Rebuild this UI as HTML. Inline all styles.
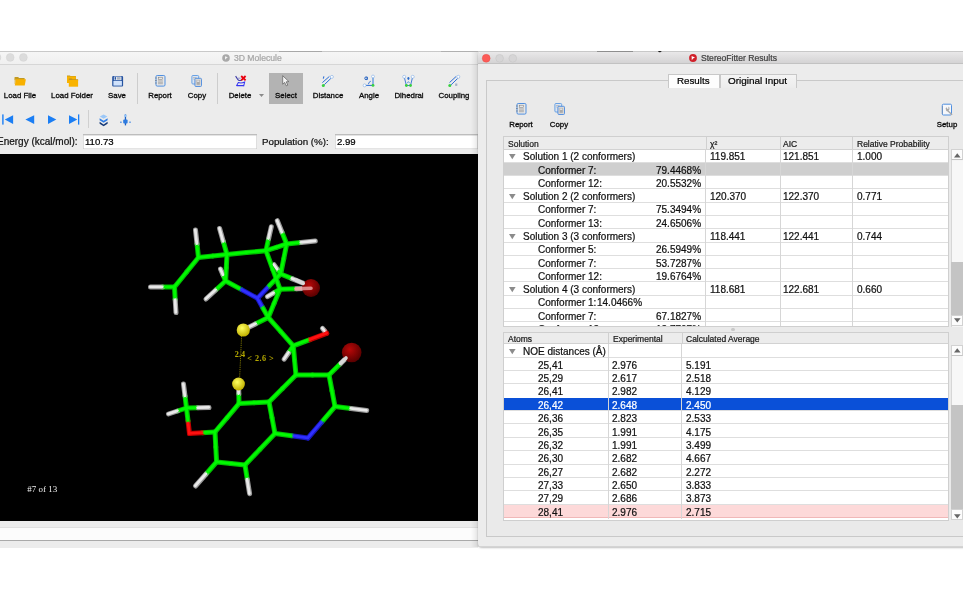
<!DOCTYPE html><html><head><meta charset="utf-8"><style>
html,body{margin:0;padding:0;}
body{width:963px;height:600px;position:relative;overflow:hidden;background:#fff;font-family:"Liberation Sans", sans-serif;}
.t{position:absolute;white-space:nowrap;line-height:1;will-change:transform;-webkit-text-stroke:0.22px currentColor;}
svg{position:absolute;overflow:visible;}
</style></head><body>
<div style="position:absolute;left:-10.00px;top:51.00px;width:488.00px;height:497.00px;background:#ececec;"></div>
<div style="position:absolute;left:-10.00px;top:51.00px;width:488.00px;height:1.00px;background:#c9c9c9;"></div>
<div style="position:absolute;left:-10.00px;top:52.00px;width:488.00px;height:11.50px;background:linear-gradient(#f6f6f6,#f0f0f0);border-bottom:1px solid #d6d6d6;"></div>
<svg style="left:0;top:50px" width="40" height="16" viewBox="0 50 40 16"><circle cx="-3" cy="57.4" r="3.9" fill="#dcdcdc" stroke="#d0d0d0" stroke-width="0.4"/><circle cx="10.2" cy="57.4" r="3.9" fill="#dcdcdc" stroke="#d0d0d0" stroke-width="0.4"/><circle cx="23.4" cy="57.4" r="3.9" fill="#dcdcdc" stroke="#d0d0d0" stroke-width="0.4"/></svg>
<svg style="left:222px;top:53.8px" width="8" height="8" viewBox="0 0 8 8"><circle cx="4" cy="4" r="3.8" fill="#a9a9a9"/><path d="M3 2.2 L5.8 3.2 L4.2 4.4 L3 5.8 Z" fill="#f2f2f2"/></svg>
<div class="t" style="left:234.00px;top:53.92px;font-size:8.6px;color:#a6a6a6;">3D Molecule</div>
<div style="position:absolute;left:268.75px;top:72.90px;width:34.45px;height:30.80px;background:#b3b3b3;"></div>
<div class="t" style="left:-280.00px;width:600px;text-align:center;top:91.95px;font-size:7.85px;color:#0a0a0a;-webkit-text-stroke:0.3px #0a0a0a;">Load File</div>
<div class="t" style="left:-227.70px;width:600px;text-align:center;top:91.95px;font-size:7.85px;color:#0a0a0a;-webkit-text-stroke:0.3px #0a0a0a;">Load Folder</div>
<div class="t" style="left:-182.70px;width:600px;text-align:center;top:91.95px;font-size:7.85px;color:#0a0a0a;-webkit-text-stroke:0.3px #0a0a0a;">Save</div>
<div class="t" style="left:-139.70px;width:600px;text-align:center;top:91.95px;font-size:7.85px;color:#0a0a0a;-webkit-text-stroke:0.3px #0a0a0a;">Report</div>
<div class="t" style="left:-103.20px;width:600px;text-align:center;top:91.95px;font-size:7.85px;color:#0a0a0a;-webkit-text-stroke:0.3px #0a0a0a;">Copy</div>
<div class="t" style="left:-59.70px;width:600px;text-align:center;top:91.95px;font-size:7.85px;color:#0a0a0a;-webkit-text-stroke:0.3px #0a0a0a;">Delete</div>
<div class="t" style="left:-14.30px;width:600px;text-align:center;top:91.95px;font-size:7.85px;color:#0a0a0a;-webkit-text-stroke:0.3px #0a0a0a;">Select</div>
<div class="t" style="left:28.00px;width:600px;text-align:center;top:91.95px;font-size:7.85px;color:#0a0a0a;-webkit-text-stroke:0.3px #0a0a0a;">Distance</div>
<div class="t" style="left:68.70px;width:600px;text-align:center;top:91.95px;font-size:7.85px;color:#0a0a0a;-webkit-text-stroke:0.3px #0a0a0a;">Angle</div>
<div class="t" style="left:108.50px;width:600px;text-align:center;top:91.95px;font-size:7.85px;color:#0a0a0a;-webkit-text-stroke:0.3px #0a0a0a;">Dihedral</div>
<div class="t" style="left:154.40px;width:600px;text-align:center;top:91.95px;font-size:7.85px;color:#0a0a0a;-webkit-text-stroke:0.3px #0a0a0a;">Coupling</div>
<div style="position:absolute;left:136.50px;top:73.00px;width:1.00px;height:30.70px;background:#cdcdcd;"></div>
<div style="position:absolute;left:216.80px;top:73.00px;width:1.00px;height:30.70px;background:#cdcdcd;"></div>
<svg style="left:258.5px;top:93.5px" width="5" height="3" viewBox="0 0 5 3"><path d="M0 0 H5 L2.5 3 Z" fill="#8a8a8a"/></svg>
<svg style="left:12px;top:74px" width="16" height="14" viewBox="12 74 16 14">
<path d="M14.6 77.1 H18.2 L19 77.9 H24.6 V80 H14.6 Z" fill="#c29a22"/>
<path d="M14.6 78 V84 L15.2 84 L15.9 79.4 Z" fill="#d8b040"/>
<path d="M15.9 79.2 H25.9 L24.7 85.5 H14.8 Z" fill="#f8b100"/>
</svg>
<svg style="left:65px;top:74px" width="16" height="14" viewBox="65 74 16 14">
<path d="M67 75.4 H69.8 L70.5 76.1 H75.9 V83 H67 Z" fill="#c29a22"/>
<path d="M67 76.4 H75.9 V83 H67 Z" fill="#f9b300"/>
<path d="M68.8 78.6 H71.6 L72.3 79.3 H78.1 V81 H68.8 Z" fill="#b8902a"/>
<path d="M68.8 79.9 H78.1 V86.7 H68.8 Z" fill="#f9b300"/>
</svg>
<svg style="left:110px;top:74px" width="15" height="14" viewBox="110 74 15 14">
<rect x="112.2" y="75.9" width="10.9" height="10.6" rx="1.1" fill="#2553a0"/>
<rect x="113.4" y="81" width="8.5" height="4.6" fill="#d0e2fb"/>
<rect x="113.9" y="76.6" width="7.5" height="3.6" fill="#f0f3f8"/>
<rect x="114.6" y="77.1" width="1.5" height="2.6" fill="#2553a0"/>
<rect x="117" y="77.1" width="3.6" height="2.6" fill="#a8b2c0"/>
</svg>
<svg style="left:154.7px;top:75.2px" width="10.5" height="11.5" viewBox="0 0 10.5 11.5">
<rect x="1" y="0.5" width="9" height="10.6" rx="1.2" fill="#e6e6e6" stroke="#4f8fe0" stroke-width="1"/>
<rect x="3.4" y="2.2" width="4" height="2.3" fill="none" stroke="#777" stroke-width="0.5"/>
<path d="M3 5.9 H7.9 M3 7.3 H7.9 M3 8.7 H7.9" stroke="#8a8a8a" stroke-width="0.6"/>
<path d="M0.2 3 H1.6 M0.2 5.5 H1.6 M0.2 8 H1.6" stroke="#555" stroke-width="0.6"/>
</svg>
<svg style="left:191.2px;top:75.0px" width="11" height="12" viewBox="0 0 11 12">
<rect x="0.9" y="0.5" width="6.8" height="8.5" rx="1" fill="#dde6f2" stroke="#5a98e2" stroke-width="0.9"/>
<path d="M2 2.5 H5.5 M2 4 H5.5" stroke="#999" stroke-width="0.5"/>
<rect x="3.9" y="3.3" width="6.6" height="8.2" rx="1" fill="#d6d6d6" stroke="#4a8ae0" stroke-width="0.9"/>
<rect x="5.6" y="5" width="3.2" height="4.8" fill="#aaa"/>
<rect x="6.1" y="5.5" width="2.2" height="1.3" fill="#eee"/>
</svg>
<svg style="left:233px;top:74px" width="15" height="14" viewBox="233 74 15 14">
<path d="M235.6 76.1 L237.8 79.5 Q238.4 80.5 239.6 80.5 H241.6" fill="none" stroke="#3b3aa6" stroke-width="1.1"/>
<path d="M237.6 78.2 H240.6" stroke="#8080c8" stroke-width="0.8"/>
<path d="M241.2 76 L245.6 80.4 M245.6 76 L241.2 80.4" stroke="#e8000e" stroke-width="1.8"/>
<path d="M236.4 86.1 L238.3 82.6 Q241.2 83.6 244.6 82.1 L243.6 86.4 M236.4 85.6 H243.8" fill="none" stroke="#3535f2" stroke-width="1.05"/>
</svg>
<svg style="left:281.8px;top:75.3px" width="8" height="12" viewBox="0 0 8 12">
<path d="M0.7 0.7 V9.2 L2.7 7.4 L4.3 10.8 L5.8 10.1 L4.2 6.8 L6.9 6.6 Z" fill="#f4f4f4" stroke="#5a5a5a" stroke-width="0.7" stroke-linejoin="round"/>
</svg>
<svg style="left:320px;top:74px" width="15" height="14" viewBox="320 74 15 14">
<path d="M322.4 82.6 L329.4 76.4 M324.3 84.7 L330.9 78.4" stroke="#2c6ed6" stroke-width="1"/>
<path d="M323.9 76.3 L323.3 78.6" stroke="#2c6ed6" stroke-width="1.1"/>
<circle cx="331.9" cy="76.9" r="1.5" fill="#fff" stroke="#6a9ee0" stroke-width="0.5"/>
<circle cx="323.3" cy="85.4" r="1.5" fill="#38d040"/>
</svg>
<svg style="left:362px;top:74px" width="14" height="14" viewBox="362 74 14 14">
<path d="M373 76.8 V85.4" stroke="#6d9fe0" stroke-width="1.5"/>
<path d="M364.6 85.4 H373" stroke="#2c6ed6" stroke-width="1"/>
<ellipse cx="366.1" cy="78.3" rx="1.3" ry="1.4" fill="none" stroke="#1f5fc0" stroke-width="1"/>
<path d="M367.2 76.8 V79.8" stroke="#1f5fc0" stroke-width="0.9"/>
<path d="M368.4 84.2 Q368.6 82 370.8 81.2" fill="none" stroke="#2c6ed6" stroke-width="0.9"/>
<circle cx="373" cy="76.5" r="1.45" fill="#fff" stroke="#6a9ee0" stroke-width="0.5"/>
<circle cx="364.6" cy="85.4" r="1.45" fill="#fff" stroke="#6a9ee0" stroke-width="0.5"/>
<circle cx="373" cy="85.4" r="1.45" fill="#38d040"/>
</svg>
<svg style="left:401px;top:74px" width="14" height="14" viewBox="401 74 14 14">
<path d="M404.2 76.8 L406.4 85.5 M412.7 76.8 L410.5 85.5 M406.4 85.5 H410.5" fill="none" stroke="#2c6ed6" stroke-width="0.9"/>
<ellipse cx="408.4" cy="78.4" rx="1.2" ry="1.1" fill="#3a7ad8"/>
<path d="M408.4 77 V80" stroke="#1f5fc0" stroke-width="0.7"/>
<path d="M407.1 83.2 L408.4 81.6 L409.7 83.2" fill="none" stroke="#4a86dc" stroke-width="0.8"/>
<circle cx="404.2" cy="76.8" r="1.5" fill="#fff" stroke="#6a9ee0" stroke-width="0.5"/>
<circle cx="412.7" cy="76.8" r="1.5" fill="#fff" stroke="#6a9ee0" stroke-width="0.5"/>
<circle cx="406.4" cy="85.5" r="1.45" fill="#38d040"/>
<circle cx="410.5" cy="85.5" r="1.45" fill="#38d040"/>
</svg>
<svg style="left:447px;top:74px" width="14" height="14" viewBox="447 74 14 14">
<path d="M449.5 82.6 L456.2 76.4 M451.1 84.8 L457.6 78.5" stroke="#2c6ed6" stroke-width="1"/>
<circle cx="458.3" cy="76.8" r="1.5" fill="#fff" stroke="#6a9ee0" stroke-width="0.5"/>
<circle cx="449.8" cy="85.5" r="1.5" fill="#38d040"/>
<path d="M455.2 84.1 H457.3 M455.2 85.2 H457.3" stroke="#6b7fa6" stroke-width="0.7"/>
</svg>
<svg style="left:0px;top:113px" width="140" height="14" viewBox="0 0 140 14">
<rect x="2.2" y="1.4" width="1.4" height="10.2" fill="#1b7ef4"/>
<path d="M4.8 6.5 L13.1 2.2 V10.9 Z" fill="#1b7ef4"/>
<path d="M25.4 6.5 L34.2 2.2 V10.9 Z" fill="#1b7ef4"/>
<path d="M56.3 6.5 L48 2.2 V10.9 Z" fill="#1b7ef4"/>
<path d="M77.3 6.5 L69 2.2 V10.9 Z" fill="#1b7ef4"/>
<rect x="78" y="1.4" width="1.3" height="10.2" fill="#1b7ef4"/>
<path d="M103.6 1.4 L107.4 3.6 L103.6 5.8 L99.8 3.6 Z" fill="#9cc8f8"/>
<path d="M99.6 5.2 L103.6 7.8 L107.6 5.2 V7.2 L103.6 9.8 L99.6 7.2 Z" fill="#2f7ee6"/>
<path d="M99.6 8.8 L103.6 11.4 L107.6 8.8 V10.8 L103.6 13.2 L99.6 10.8 Z" fill="#163a78"/>
<rect x="124.8" y="1.4" width="1.3" height="11" fill="#1b5fc4"/>
<circle cx="125.4" cy="2.8" r="1.3" fill="#8fc1f7"/>
<rect x="123.2" y="6.4" width="4.4" height="4" rx="1" fill="#2d7be0"/>
<rect x="120.2" y="8.6" width="1.4" height="1.2" fill="#2d7be0"/>
<rect x="129.3" y="8.6" width="1.4" height="1.2" fill="#2d7be0"/>
</svg>
<div style="position:absolute;left:88.00px;top:110.00px;width:1.00px;height:18.30px;background:#d0d0d0;"></div>
<div class="t" style="left:-2.60px;top:137.03px;font-size:10px;color:#111;">Energy (kcal/mol):</div>
<div style="position:absolute;left:82.90px;top:134.30px;width:173.90px;height:15.20px;background:#fff;box-shadow:inset 0 0 0 0.6px #c9c9c9;border-top:0.5px solid #bdbdbd;box-sizing:border-box;"></div>
<div class="t" style="left:85.20px;top:137.37px;font-size:9.6px;color:#000;">110.73</div>
<div class="t" style="left:262.40px;top:137.25px;font-size:9.75px;color:#111;">Population (%):</div>
<div style="position:absolute;left:334.90px;top:134.30px;width:143.10px;height:15.20px;background:#fff;box-shadow:inset 0 0 0 0.6px #c9c9c9;border-top:0.5px solid #bdbdbd;box-sizing:border-box;"></div>
<div class="t" style="left:337.20px;top:137.37px;font-size:9.6px;color:#000;">2.99</div>
<div style="position:absolute;left:0.00px;top:153.80px;width:478.00px;height:367.50px;background:#000;"></div>
<div style="position:absolute;left:0.00px;top:521.30px;width:478.00px;height:5.50px;background:#ececec;"></div>
<div style="position:absolute;left:0.00px;top:526.80px;width:478.00px;height:13.20px;background:#fcfcfc;border-top:0.5px solid #e0e0e0;box-sizing:border-box;"></div>
<div style="position:absolute;left:0.00px;top:540.00px;width:478.00px;height:1.00px;background:#a9a9a9;"></div>
<div style="position:absolute;left:0.00px;top:541.00px;width:478.00px;height:7.00px;background:#ececec;"></div>
<div style="position:absolute;left:279.00px;top:50.90px;width:43.00px;height:0.90px;background:#a8a8a8;"></div>
<div style="position:absolute;left:441.00px;top:50.90px;width:37.00px;height:0.90px;background:#b0b0b0;"></div>
<svg style="left:0;top:0" width="963" height="600" viewBox="0 0 963 600">
<defs><radialGradient id="rb" cx="40%" cy="35%" r="65%"><stop offset="0" stop-color="#b80808"/><stop offset="1" stop-color="#5a0000"/></radialGradient><radialGradient id="yb" cx="40%" cy="35%" r="65%"><stop offset="0" stop-color="#ffff60"/><stop offset="1" stop-color="#c0b000"/></radialGradient></defs>
<line x1="174.5" y1="287.0" x2="162.5" y2="287.0" stroke="#00c000" stroke-width="5.0" stroke-linecap="round"/>
<line x1="150.5" y1="287.0" x2="162.5" y2="287.0" stroke="#9a9a9a" stroke-width="5.0" stroke-linecap="round"/>
<line x1="174.5" y1="287.0" x2="175.2" y2="299.8" stroke="#00c000" stroke-width="5.0" stroke-linecap="round"/>
<line x1="176.0" y1="312.6" x2="175.2" y2="299.8" stroke="#9a9a9a" stroke-width="5.0" stroke-linecap="round"/>
<line x1="174.5" y1="287.0" x2="186.5" y2="272.2" stroke="#00c000" stroke-width="5.0" stroke-linecap="round"/>
<line x1="198.5" y1="257.5" x2="186.5" y2="272.2" stroke="#00c000" stroke-width="5.0" stroke-linecap="round"/>
<line x1="198.5" y1="257.5" x2="197.0" y2="243.8" stroke="#00c000" stroke-width="5.0" stroke-linecap="round"/>
<line x1="195.5" y1="230.0" x2="197.0" y2="243.8" stroke="#9a9a9a" stroke-width="5.0" stroke-linecap="round"/>
<line x1="198.5" y1="257.5" x2="212.8" y2="256.0" stroke="#00c000" stroke-width="5.0" stroke-linecap="round"/>
<line x1="227.0" y1="254.5" x2="212.8" y2="256.0" stroke="#00c000" stroke-width="5.0" stroke-linecap="round"/>
<line x1="227.0" y1="254.5" x2="223.3" y2="241.5" stroke="#00c000" stroke-width="5.0" stroke-linecap="round"/>
<line x1="219.6" y1="228.5" x2="223.3" y2="241.5" stroke="#9a9a9a" stroke-width="5.0" stroke-linecap="round"/>
<line x1="227.0" y1="254.5" x2="246.5" y2="252.6" stroke="#00c000" stroke-width="5.0" stroke-linecap="round"/>
<line x1="266.0" y1="250.7" x2="246.5" y2="252.6" stroke="#00c000" stroke-width="5.0" stroke-linecap="round"/>
<line x1="266.0" y1="250.7" x2="268.6" y2="238.7" stroke="#00c000" stroke-width="5.0" stroke-linecap="round"/>
<line x1="271.3" y1="226.7" x2="268.6" y2="238.7" stroke="#9a9a9a" stroke-width="5.0" stroke-linecap="round"/>
<line x1="266.0" y1="250.7" x2="276.4" y2="247.3" stroke="#00c000" stroke-width="5.0" stroke-linecap="round"/>
<line x1="286.7" y1="244.0" x2="276.4" y2="247.3" stroke="#00c000" stroke-width="5.0" stroke-linecap="round"/>
<line x1="286.7" y1="244.0" x2="282.0" y2="232.3" stroke="#00c000" stroke-width="5.0" stroke-linecap="round"/>
<line x1="277.3" y1="220.7" x2="282.0" y2="232.3" stroke="#9a9a9a" stroke-width="5.0" stroke-linecap="round"/>
<line x1="286.7" y1="244.0" x2="301.0" y2="242.5" stroke="#00c000" stroke-width="5.0" stroke-linecap="round"/>
<line x1="315.3" y1="241.0" x2="301.0" y2="242.5" stroke="#9a9a9a" stroke-width="5.0" stroke-linecap="round"/>
<line x1="227.0" y1="254.5" x2="226.3" y2="267.8" stroke="#00c000" stroke-width="5.0" stroke-linecap="round"/>
<line x1="225.6" y1="281.0" x2="226.3" y2="267.8" stroke="#00c000" stroke-width="5.0" stroke-linecap="round"/>
<line x1="225.6" y1="281.0" x2="223.1" y2="275.0" stroke="#00c000" stroke-width="5.0" stroke-linecap="round"/>
<line x1="220.5" y1="269.0" x2="223.1" y2="275.0" stroke="#9a9a9a" stroke-width="5.0" stroke-linecap="round"/>
<line x1="225.6" y1="281.0" x2="215.8" y2="290.0" stroke="#00c000" stroke-width="5.0" stroke-linecap="round"/>
<line x1="206.0" y1="299.0" x2="215.8" y2="290.0" stroke="#9a9a9a" stroke-width="5.0" stroke-linecap="round"/>
<line x1="225.6" y1="281.0" x2="241.6" y2="289.6" stroke="#00c000" stroke-width="5.0" stroke-linecap="round"/>
<line x1="257.5" y1="298.3" x2="241.6" y2="289.6" stroke="#1818c0" stroke-width="5.0" stroke-linecap="round"/>
<line x1="257.5" y1="298.3" x2="269.1" y2="286.1" stroke="#1818c0" stroke-width="5.0" stroke-linecap="round"/>
<line x1="280.7" y1="274.0" x2="269.1" y2="286.1" stroke="#00c000" stroke-width="5.0" stroke-linecap="round"/>
<line x1="286.7" y1="244.0" x2="283.7" y2="259.0" stroke="#00c000" stroke-width="5.0" stroke-linecap="round"/>
<line x1="280.7" y1="274.0" x2="283.7" y2="259.0" stroke="#00c000" stroke-width="5.0" stroke-linecap="round"/>
<line x1="280.7" y1="274.0" x2="277.4" y2="269.4" stroke="#00c000" stroke-width="5.0" stroke-linecap="round"/>
<line x1="274.0" y1="264.7" x2="277.4" y2="269.4" stroke="#9a9a9a" stroke-width="5.0" stroke-linecap="round"/>
<line x1="280.7" y1="274.0" x2="292.0" y2="278.6" stroke="#00c000" stroke-width="5.0" stroke-linecap="round"/>
<line x1="303.3" y1="283.3" x2="292.0" y2="278.6" stroke="#9a9a9a" stroke-width="5.0" stroke-linecap="round"/>
<line x1="266.0" y1="250.7" x2="273.0" y2="269.9" stroke="#00c000" stroke-width="5.0" stroke-linecap="round"/>
<line x1="280.0" y1="289.2" x2="273.0" y2="269.9" stroke="#00c000" stroke-width="5.0" stroke-linecap="round"/>
<line x1="280.0" y1="289.2" x2="273.8" y2="292.9" stroke="#00c000" stroke-width="5.0" stroke-linecap="round"/>
<line x1="267.5" y1="296.7" x2="273.8" y2="292.9" stroke="#9a9a9a" stroke-width="5.0" stroke-linecap="round"/>
<line x1="280.0" y1="289.2" x2="296.2" y2="288.8" stroke="#00c000" stroke-width="5.0" stroke-linecap="round"/>
<line x1="312.5" y1="288.3" x2="296.2" y2="288.8" stroke="#9a9a9a" stroke-width="5.0" stroke-linecap="round"/>
<line x1="257.5" y1="298.3" x2="262.9" y2="307.9" stroke="#1818c0" stroke-width="5.0" stroke-linecap="round"/>
<line x1="268.3" y1="317.5" x2="262.9" y2="307.9" stroke="#00c000" stroke-width="5.0" stroke-linecap="round"/>
<line x1="280.0" y1="289.2" x2="274.1" y2="303.4" stroke="#00c000" stroke-width="5.0" stroke-linecap="round"/>
<line x1="268.3" y1="317.5" x2="274.1" y2="303.4" stroke="#00c000" stroke-width="5.0" stroke-linecap="round"/>
<line x1="268.3" y1="317.5" x2="255.8" y2="323.8" stroke="#00c000" stroke-width="5.0" stroke-linecap="round"/>
<line x1="243.3" y1="330.0" x2="255.8" y2="323.8" stroke="#9a9a9a" stroke-width="5.0" stroke-linecap="round"/>
<line x1="268.3" y1="317.5" x2="280.8" y2="331.6" stroke="#00c000" stroke-width="5.0" stroke-linecap="round"/>
<line x1="293.3" y1="345.8" x2="280.8" y2="331.6" stroke="#00c000" stroke-width="5.0" stroke-linecap="round"/>
<line x1="293.3" y1="345.8" x2="310.0" y2="339.6" stroke="#00c000" stroke-width="5.0" stroke-linecap="round"/>
<line x1="326.7" y1="333.3" x2="310.0" y2="339.6" stroke="#c00000" stroke-width="5.0" stroke-linecap="round"/>
<line x1="326.7" y1="333.3" x2="324.6" y2="330.8" stroke="#c00000" stroke-width="5.0" stroke-linecap="round"/>
<line x1="322.5" y1="328.3" x2="324.6" y2="330.8" stroke="#9a9a9a" stroke-width="5.0" stroke-linecap="round"/>
<line x1="293.3" y1="345.8" x2="288.8" y2="352.5" stroke="#00c000" stroke-width="5.0" stroke-linecap="round"/>
<line x1="284.2" y1="359.2" x2="288.8" y2="352.5" stroke="#9a9a9a" stroke-width="5.0" stroke-linecap="round"/>
<line x1="293.3" y1="345.8" x2="294.6" y2="360.4" stroke="#00c000" stroke-width="5.0" stroke-linecap="round"/>
<line x1="296.0" y1="375.0" x2="294.6" y2="360.4" stroke="#00c000" stroke-width="5.0" stroke-linecap="round"/>
<line x1="296.0" y1="375.0" x2="312.5" y2="375.0" stroke="#00c000" stroke-width="5.0" stroke-linecap="round"/>
<line x1="329.0" y1="375.0" x2="312.5" y2="375.0" stroke="#00c000" stroke-width="5.0" stroke-linecap="round"/>
<line x1="329.0" y1="375.0" x2="340.4" y2="363.8" stroke="#00c000" stroke-width="5.0" stroke-linecap="round"/>
<line x1="351.7" y1="352.5" x2="340.4" y2="363.8" stroke="#9a9a9a" stroke-width="5.0" stroke-linecap="round"/>
<line x1="329.0" y1="375.0" x2="332.0" y2="390.8" stroke="#00c000" stroke-width="5.0" stroke-linecap="round"/>
<line x1="335.0" y1="406.6" x2="332.0" y2="390.8" stroke="#00c000" stroke-width="5.0" stroke-linecap="round"/>
<line x1="335.0" y1="406.6" x2="350.9" y2="408.6" stroke="#00c000" stroke-width="5.0" stroke-linecap="round"/>
<line x1="366.7" y1="410.5" x2="350.9" y2="408.6" stroke="#9a9a9a" stroke-width="5.0" stroke-linecap="round"/>
<line x1="335.0" y1="406.6" x2="321.5" y2="422.3" stroke="#00c000" stroke-width="5.0" stroke-linecap="round"/>
<line x1="308.0" y1="438.0" x2="321.5" y2="422.3" stroke="#1818c0" stroke-width="5.0" stroke-linecap="round"/>
<line x1="308.0" y1="438.0" x2="291.5" y2="435.8" stroke="#1818c0" stroke-width="5.0" stroke-linecap="round"/>
<line x1="275.0" y1="433.6" x2="291.5" y2="435.8" stroke="#00c000" stroke-width="5.0" stroke-linecap="round"/>
<line x1="275.0" y1="433.6" x2="272.0" y2="417.8" stroke="#00c000" stroke-width="5.0" stroke-linecap="round"/>
<line x1="269.0" y1="402.0" x2="272.0" y2="417.8" stroke="#00c000" stroke-width="5.0" stroke-linecap="round"/>
<line x1="269.0" y1="402.0" x2="282.5" y2="388.5" stroke="#00c000" stroke-width="5.0" stroke-linecap="round"/>
<line x1="296.0" y1="375.0" x2="282.5" y2="388.5" stroke="#00c000" stroke-width="5.0" stroke-linecap="round"/>
<line x1="269.0" y1="402.0" x2="254.0" y2="402.8" stroke="#00c000" stroke-width="5.0" stroke-linecap="round"/>
<line x1="239.0" y1="403.6" x2="254.0" y2="402.8" stroke="#00c000" stroke-width="5.0" stroke-linecap="round"/>
<line x1="239.0" y1="403.6" x2="238.8" y2="393.8" stroke="#00c000" stroke-width="5.0" stroke-linecap="round"/>
<line x1="238.5" y1="384.0" x2="238.8" y2="393.8" stroke="#9a9a9a" stroke-width="5.0" stroke-linecap="round"/>
<line x1="239.0" y1="403.6" x2="227.0" y2="417.8" stroke="#00c000" stroke-width="5.0" stroke-linecap="round"/>
<line x1="215.0" y1="432.0" x2="227.0" y2="417.8" stroke="#00c000" stroke-width="5.0" stroke-linecap="round"/>
<line x1="215.0" y1="432.0" x2="202.2" y2="432.8" stroke="#00c000" stroke-width="5.0" stroke-linecap="round"/>
<line x1="189.5" y1="433.6" x2="202.2" y2="432.8" stroke="#c00000" stroke-width="5.0" stroke-linecap="round"/>
<line x1="189.5" y1="433.6" x2="188.0" y2="420.8" stroke="#c00000" stroke-width="5.0" stroke-linecap="round"/>
<line x1="186.5" y1="408.0" x2="188.0" y2="420.8" stroke="#00c000" stroke-width="5.0" stroke-linecap="round"/>
<line x1="186.5" y1="408.0" x2="185.0" y2="396.0" stroke="#00c000" stroke-width="5.0" stroke-linecap="round"/>
<line x1="183.5" y1="384.0" x2="185.0" y2="396.0" stroke="#9a9a9a" stroke-width="5.0" stroke-linecap="round"/>
<line x1="186.5" y1="408.0" x2="197.8" y2="407.8" stroke="#00c000" stroke-width="5.0" stroke-linecap="round"/>
<line x1="209.0" y1="407.5" x2="197.8" y2="407.8" stroke="#9a9a9a" stroke-width="5.0" stroke-linecap="round"/>
<line x1="186.5" y1="408.0" x2="177.5" y2="411.0" stroke="#00c000" stroke-width="5.0" stroke-linecap="round"/>
<line x1="168.5" y1="414.0" x2="177.5" y2="411.0" stroke="#9a9a9a" stroke-width="5.0" stroke-linecap="round"/>
<line x1="215.0" y1="432.0" x2="215.8" y2="447.0" stroke="#00c000" stroke-width="5.0" stroke-linecap="round"/>
<line x1="216.6" y1="462.0" x2="215.8" y2="447.0" stroke="#00c000" stroke-width="5.0" stroke-linecap="round"/>
<line x1="216.6" y1="462.0" x2="206.1" y2="474.0" stroke="#00c000" stroke-width="5.0" stroke-linecap="round"/>
<line x1="195.5" y1="486.0" x2="206.1" y2="474.0" stroke="#9a9a9a" stroke-width="5.0" stroke-linecap="round"/>
<line x1="216.6" y1="462.0" x2="230.8" y2="463.5" stroke="#00c000" stroke-width="5.0" stroke-linecap="round"/>
<line x1="245.0" y1="465.0" x2="230.8" y2="463.5" stroke="#00c000" stroke-width="5.0" stroke-linecap="round"/>
<line x1="245.0" y1="465.0" x2="247.3" y2="479.4" stroke="#00c000" stroke-width="5.0" stroke-linecap="round"/>
<line x1="249.6" y1="493.7" x2="247.3" y2="479.4" stroke="#9a9a9a" stroke-width="5.0" stroke-linecap="round"/>
<line x1="245.0" y1="465.0" x2="260.0" y2="449.3" stroke="#00c000" stroke-width="5.0" stroke-linecap="round"/>
<line x1="275.0" y1="433.6" x2="260.0" y2="449.3" stroke="#00c000" stroke-width="5.0" stroke-linecap="round"/>
<line x1="174.3" y1="286.8" x2="162.3" y2="286.8" stroke="#00fa00" stroke-width="2.8" stroke-linecap="round"/>
<line x1="150.3" y1="286.8" x2="162.3" y2="286.8" stroke="#e8e8e8" stroke-width="2.8" stroke-linecap="round"/>
<line x1="174.3" y1="286.8" x2="175.1" y2="299.6" stroke="#00fa00" stroke-width="2.8" stroke-linecap="round"/>
<line x1="175.8" y1="312.4" x2="175.1" y2="299.6" stroke="#e8e8e8" stroke-width="2.8" stroke-linecap="round"/>
<line x1="174.3" y1="286.8" x2="186.3" y2="272.1" stroke="#00fa00" stroke-width="2.8" stroke-linecap="round"/>
<line x1="198.3" y1="257.3" x2="186.3" y2="272.1" stroke="#00fa00" stroke-width="2.8" stroke-linecap="round"/>
<line x1="198.3" y1="257.3" x2="196.8" y2="243.6" stroke="#00fa00" stroke-width="2.8" stroke-linecap="round"/>
<line x1="195.3" y1="229.8" x2="196.8" y2="243.6" stroke="#e8e8e8" stroke-width="2.8" stroke-linecap="round"/>
<line x1="198.3" y1="257.3" x2="212.6" y2="255.8" stroke="#00fa00" stroke-width="2.8" stroke-linecap="round"/>
<line x1="226.8" y1="254.3" x2="212.6" y2="255.8" stroke="#00fa00" stroke-width="2.8" stroke-linecap="round"/>
<line x1="226.8" y1="254.3" x2="223.1" y2="241.3" stroke="#00fa00" stroke-width="2.8" stroke-linecap="round"/>
<line x1="219.4" y1="228.3" x2="223.1" y2="241.3" stroke="#e8e8e8" stroke-width="2.8" stroke-linecap="round"/>
<line x1="226.8" y1="254.3" x2="246.3" y2="252.4" stroke="#00fa00" stroke-width="2.8" stroke-linecap="round"/>
<line x1="265.8" y1="250.5" x2="246.3" y2="252.4" stroke="#00fa00" stroke-width="2.8" stroke-linecap="round"/>
<line x1="265.8" y1="250.5" x2="268.4" y2="238.5" stroke="#00fa00" stroke-width="2.8" stroke-linecap="round"/>
<line x1="271.1" y1="226.5" x2="268.4" y2="238.5" stroke="#e8e8e8" stroke-width="2.8" stroke-linecap="round"/>
<line x1="265.8" y1="250.5" x2="276.2" y2="247.2" stroke="#00fa00" stroke-width="2.8" stroke-linecap="round"/>
<line x1="286.5" y1="243.8" x2="276.2" y2="247.2" stroke="#00fa00" stroke-width="2.8" stroke-linecap="round"/>
<line x1="286.5" y1="243.8" x2="281.8" y2="232.2" stroke="#00fa00" stroke-width="2.8" stroke-linecap="round"/>
<line x1="277.1" y1="220.5" x2="281.8" y2="232.2" stroke="#e8e8e8" stroke-width="2.8" stroke-linecap="round"/>
<line x1="286.5" y1="243.8" x2="300.8" y2="242.3" stroke="#00fa00" stroke-width="2.8" stroke-linecap="round"/>
<line x1="315.1" y1="240.8" x2="300.8" y2="242.3" stroke="#e8e8e8" stroke-width="2.8" stroke-linecap="round"/>
<line x1="226.8" y1="254.3" x2="226.1" y2="267.6" stroke="#00fa00" stroke-width="2.8" stroke-linecap="round"/>
<line x1="225.4" y1="280.8" x2="226.1" y2="267.6" stroke="#00fa00" stroke-width="2.8" stroke-linecap="round"/>
<line x1="225.4" y1="280.8" x2="222.9" y2="274.8" stroke="#00fa00" stroke-width="2.8" stroke-linecap="round"/>
<line x1="220.3" y1="268.8" x2="222.9" y2="274.8" stroke="#e8e8e8" stroke-width="2.8" stroke-linecap="round"/>
<line x1="225.4" y1="280.8" x2="215.6" y2="289.8" stroke="#00fa00" stroke-width="2.8" stroke-linecap="round"/>
<line x1="205.8" y1="298.8" x2="215.6" y2="289.8" stroke="#e8e8e8" stroke-width="2.8" stroke-linecap="round"/>
<line x1="225.4" y1="280.8" x2="241.4" y2="289.4" stroke="#00fa00" stroke-width="2.8" stroke-linecap="round"/>
<line x1="257.3" y1="298.1" x2="241.4" y2="289.4" stroke="#3030ff" stroke-width="2.8" stroke-linecap="round"/>
<line x1="257.3" y1="298.1" x2="268.9" y2="285.9" stroke="#3030ff" stroke-width="2.8" stroke-linecap="round"/>
<line x1="280.5" y1="273.8" x2="268.9" y2="285.9" stroke="#00fa00" stroke-width="2.8" stroke-linecap="round"/>
<line x1="286.5" y1="243.8" x2="283.5" y2="258.8" stroke="#00fa00" stroke-width="2.8" stroke-linecap="round"/>
<line x1="280.5" y1="273.8" x2="283.5" y2="258.8" stroke="#00fa00" stroke-width="2.8" stroke-linecap="round"/>
<line x1="280.5" y1="273.8" x2="277.2" y2="269.2" stroke="#00fa00" stroke-width="2.8" stroke-linecap="round"/>
<line x1="273.8" y1="264.5" x2="277.2" y2="269.2" stroke="#e8e8e8" stroke-width="2.8" stroke-linecap="round"/>
<line x1="280.5" y1="273.8" x2="291.8" y2="278.4" stroke="#00fa00" stroke-width="2.8" stroke-linecap="round"/>
<line x1="303.1" y1="283.1" x2="291.8" y2="278.4" stroke="#e8e8e8" stroke-width="2.8" stroke-linecap="round"/>
<line x1="265.8" y1="250.5" x2="272.8" y2="269.8" stroke="#00fa00" stroke-width="2.8" stroke-linecap="round"/>
<line x1="279.8" y1="289.0" x2="272.8" y2="269.8" stroke="#00fa00" stroke-width="2.8" stroke-linecap="round"/>
<line x1="279.8" y1="289.0" x2="273.6" y2="292.8" stroke="#00fa00" stroke-width="2.8" stroke-linecap="round"/>
<line x1="267.3" y1="296.5" x2="273.6" y2="292.8" stroke="#e8e8e8" stroke-width="2.8" stroke-linecap="round"/>
<line x1="279.8" y1="289.0" x2="296.1" y2="288.6" stroke="#00fa00" stroke-width="2.8" stroke-linecap="round"/>
<line x1="312.3" y1="288.1" x2="296.1" y2="288.6" stroke="#e8e8e8" stroke-width="2.8" stroke-linecap="round"/>
<line x1="257.3" y1="298.1" x2="262.7" y2="307.7" stroke="#3030ff" stroke-width="2.8" stroke-linecap="round"/>
<line x1="268.1" y1="317.3" x2="262.7" y2="307.7" stroke="#00fa00" stroke-width="2.8" stroke-linecap="round"/>
<line x1="279.8" y1="289.0" x2="273.9" y2="303.2" stroke="#00fa00" stroke-width="2.8" stroke-linecap="round"/>
<line x1="268.1" y1="317.3" x2="273.9" y2="303.2" stroke="#00fa00" stroke-width="2.8" stroke-linecap="round"/>
<line x1="268.1" y1="317.3" x2="255.6" y2="323.6" stroke="#00fa00" stroke-width="2.8" stroke-linecap="round"/>
<line x1="243.1" y1="329.8" x2="255.6" y2="323.6" stroke="#e8e8e8" stroke-width="2.8" stroke-linecap="round"/>
<line x1="268.1" y1="317.3" x2="280.6" y2="331.4" stroke="#00fa00" stroke-width="2.8" stroke-linecap="round"/>
<line x1="293.1" y1="345.6" x2="280.6" y2="331.4" stroke="#00fa00" stroke-width="2.8" stroke-linecap="round"/>
<line x1="293.1" y1="345.6" x2="309.8" y2="339.4" stroke="#00fa00" stroke-width="2.8" stroke-linecap="round"/>
<line x1="326.5" y1="333.1" x2="309.8" y2="339.4" stroke="#ff1010" stroke-width="2.8" stroke-linecap="round"/>
<line x1="326.5" y1="333.1" x2="324.4" y2="330.6" stroke="#ff1010" stroke-width="2.8" stroke-linecap="round"/>
<line x1="322.3" y1="328.1" x2="324.4" y2="330.6" stroke="#e8e8e8" stroke-width="2.8" stroke-linecap="round"/>
<line x1="293.1" y1="345.6" x2="288.6" y2="352.3" stroke="#00fa00" stroke-width="2.8" stroke-linecap="round"/>
<line x1="284.0" y1="359.0" x2="288.6" y2="352.3" stroke="#e8e8e8" stroke-width="2.8" stroke-linecap="round"/>
<line x1="293.1" y1="345.6" x2="294.4" y2="360.2" stroke="#00fa00" stroke-width="2.8" stroke-linecap="round"/>
<line x1="295.8" y1="374.8" x2="294.4" y2="360.2" stroke="#00fa00" stroke-width="2.8" stroke-linecap="round"/>
<line x1="295.8" y1="374.8" x2="312.3" y2="374.8" stroke="#00fa00" stroke-width="2.8" stroke-linecap="round"/>
<line x1="328.8" y1="374.8" x2="312.3" y2="374.8" stroke="#00fa00" stroke-width="2.8" stroke-linecap="round"/>
<line x1="328.8" y1="374.8" x2="340.2" y2="363.6" stroke="#00fa00" stroke-width="2.8" stroke-linecap="round"/>
<line x1="351.5" y1="352.3" x2="340.2" y2="363.6" stroke="#e8e8e8" stroke-width="2.8" stroke-linecap="round"/>
<line x1="328.8" y1="374.8" x2="331.8" y2="390.6" stroke="#00fa00" stroke-width="2.8" stroke-linecap="round"/>
<line x1="334.8" y1="406.4" x2="331.8" y2="390.6" stroke="#00fa00" stroke-width="2.8" stroke-linecap="round"/>
<line x1="334.8" y1="406.4" x2="350.7" y2="408.4" stroke="#00fa00" stroke-width="2.8" stroke-linecap="round"/>
<line x1="366.5" y1="410.3" x2="350.7" y2="408.4" stroke="#e8e8e8" stroke-width="2.8" stroke-linecap="round"/>
<line x1="334.8" y1="406.4" x2="321.3" y2="422.1" stroke="#00fa00" stroke-width="2.8" stroke-linecap="round"/>
<line x1="307.8" y1="437.8" x2="321.3" y2="422.1" stroke="#3030ff" stroke-width="2.8" stroke-linecap="round"/>
<line x1="307.8" y1="437.8" x2="291.3" y2="435.6" stroke="#3030ff" stroke-width="2.8" stroke-linecap="round"/>
<line x1="274.8" y1="433.4" x2="291.3" y2="435.6" stroke="#00fa00" stroke-width="2.8" stroke-linecap="round"/>
<line x1="274.8" y1="433.4" x2="271.8" y2="417.6" stroke="#00fa00" stroke-width="2.8" stroke-linecap="round"/>
<line x1="268.8" y1="401.8" x2="271.8" y2="417.6" stroke="#00fa00" stroke-width="2.8" stroke-linecap="round"/>
<line x1="268.8" y1="401.8" x2="282.3" y2="388.3" stroke="#00fa00" stroke-width="2.8" stroke-linecap="round"/>
<line x1="295.8" y1="374.8" x2="282.3" y2="388.3" stroke="#00fa00" stroke-width="2.8" stroke-linecap="round"/>
<line x1="268.8" y1="401.8" x2="253.8" y2="402.6" stroke="#00fa00" stroke-width="2.8" stroke-linecap="round"/>
<line x1="238.8" y1="403.4" x2="253.8" y2="402.6" stroke="#00fa00" stroke-width="2.8" stroke-linecap="round"/>
<line x1="238.8" y1="403.4" x2="238.6" y2="393.6" stroke="#00fa00" stroke-width="2.8" stroke-linecap="round"/>
<line x1="238.3" y1="383.8" x2="238.6" y2="393.6" stroke="#e8e8e8" stroke-width="2.8" stroke-linecap="round"/>
<line x1="238.8" y1="403.4" x2="226.8" y2="417.6" stroke="#00fa00" stroke-width="2.8" stroke-linecap="round"/>
<line x1="214.8" y1="431.8" x2="226.8" y2="417.6" stroke="#00fa00" stroke-width="2.8" stroke-linecap="round"/>
<line x1="214.8" y1="431.8" x2="202.1" y2="432.6" stroke="#00fa00" stroke-width="2.8" stroke-linecap="round"/>
<line x1="189.3" y1="433.4" x2="202.1" y2="432.6" stroke="#ff1010" stroke-width="2.8" stroke-linecap="round"/>
<line x1="189.3" y1="433.4" x2="187.8" y2="420.6" stroke="#ff1010" stroke-width="2.8" stroke-linecap="round"/>
<line x1="186.3" y1="407.8" x2="187.8" y2="420.6" stroke="#00fa00" stroke-width="2.8" stroke-linecap="round"/>
<line x1="186.3" y1="407.8" x2="184.8" y2="395.8" stroke="#00fa00" stroke-width="2.8" stroke-linecap="round"/>
<line x1="183.3" y1="383.8" x2="184.8" y2="395.8" stroke="#e8e8e8" stroke-width="2.8" stroke-linecap="round"/>
<line x1="186.3" y1="407.8" x2="197.6" y2="407.6" stroke="#00fa00" stroke-width="2.8" stroke-linecap="round"/>
<line x1="208.8" y1="407.3" x2="197.6" y2="407.6" stroke="#e8e8e8" stroke-width="2.8" stroke-linecap="round"/>
<line x1="186.3" y1="407.8" x2="177.3" y2="410.8" stroke="#00fa00" stroke-width="2.8" stroke-linecap="round"/>
<line x1="168.3" y1="413.8" x2="177.3" y2="410.8" stroke="#e8e8e8" stroke-width="2.8" stroke-linecap="round"/>
<line x1="214.8" y1="431.8" x2="215.6" y2="446.8" stroke="#00fa00" stroke-width="2.8" stroke-linecap="round"/>
<line x1="216.4" y1="461.8" x2="215.6" y2="446.8" stroke="#00fa00" stroke-width="2.8" stroke-linecap="round"/>
<line x1="216.4" y1="461.8" x2="205.9" y2="473.8" stroke="#00fa00" stroke-width="2.8" stroke-linecap="round"/>
<line x1="195.3" y1="485.8" x2="205.9" y2="473.8" stroke="#e8e8e8" stroke-width="2.8" stroke-linecap="round"/>
<line x1="216.4" y1="461.8" x2="230.6" y2="463.3" stroke="#00fa00" stroke-width="2.8" stroke-linecap="round"/>
<line x1="244.8" y1="464.8" x2="230.6" y2="463.3" stroke="#00fa00" stroke-width="2.8" stroke-linecap="round"/>
<line x1="244.8" y1="464.8" x2="247.1" y2="479.2" stroke="#00fa00" stroke-width="2.8" stroke-linecap="round"/>
<line x1="249.4" y1="493.5" x2="247.1" y2="479.2" stroke="#e8e8e8" stroke-width="2.8" stroke-linecap="round"/>
<line x1="244.8" y1="464.8" x2="259.8" y2="449.1" stroke="#00fa00" stroke-width="2.8" stroke-linecap="round"/>
<line x1="274.8" y1="433.4" x2="259.8" y2="449.1" stroke="#00fa00" stroke-width="2.8" stroke-linecap="round"/>
<circle cx="311" cy="288" r="9" fill="url(#rb)"/>
<circle cx="351.7" cy="352.5" r="9.8" fill="url(#rb)"/>
<line x1="296" y1="288.7" x2="311" y2="288.3" stroke="#e8a0a0" stroke-width="3.6" stroke-linecap="round" opacity="0.85"/>
<line x1="296" y1="280" x2="303.3" y2="283.3" stroke="#d8d8d8" stroke-width="3.6" stroke-linecap="round"/>
<line x1="341" y1="363" x2="346" y2="358" stroke="#d8d8d8" stroke-width="3.6" stroke-linecap="round"/>
<line x1="241.6" y1="336" x2="239.6" y2="378" stroke="#9a9000" stroke-width="0.8" stroke-dasharray="1.2,1"/>
<circle cx="243.3" cy="330" r="6.6" fill="url(#yb)"/>
<circle cx="238.5" cy="384" r="6.4" fill="url(#yb)"/>
<text x="234.8" y="357" font-family="Liberation Serif" font-weight="bold" font-size="8.2" fill="#b4a800">2.4</text>
<text x="247.3" y="361" font-family="Liberation Serif" font-weight="bold" font-size="8.2" letter-spacing="0.45" fill="#b4a800">&lt; 2.6 &gt;</text>
<text x="27.3" y="491.8" font-family="Liberation Serif" font-size="9" fill="#f0f0f0">#7 of 13</text>
</svg>
<div style="position:absolute;left:471.00px;top:52.00px;width:8.00px;height:495.00px;background:linear-gradient(to right, rgba(0,0,0,0), rgba(0,0,0,0.10));"></div>
<div style="position:absolute;left:477.50px;top:51.90px;width:500.00px;height:494.80px;background:#ececec;box-shadow:0 1px 2px rgba(0,0,0,0.25);border-radius:4px 4px 0 4px;"></div>
<div style="position:absolute;left:477.50px;top:51.90px;width:500.00px;height:12.00px;background:linear-gradient(#e9e8e9,#d4d3d4);border-bottom:0.6px solid #c2c2c2;box-sizing:border-box;border-radius:4px 0 0 0;"></div>
<div style="position:absolute;left:477.50px;top:51.40px;width:500.00px;height:0.80px;background:#c8c8c8;"></div>
<svg style="left:478px;top:52px" width="42" height="14" viewBox="478 52 42 14"><circle cx="486.2" cy="58.3" r="3.95" fill="#fc5b57" stroke="#e24b47" stroke-width="0.4"/><circle cx="499.6" cy="58.3" r="3.85" fill="#d6d5d6" stroke="#c2c2c2" stroke-width="0.5"/><circle cx="512.8" cy="58.3" r="3.85" fill="#d6d5d6" stroke="#c2c2c2" stroke-width="0.5"/></svg>
<svg style="left:689px;top:54.3px" width="8" height="8" viewBox="0 0 8 8"><circle cx="4" cy="4" r="3.9" fill="#d0202a"/><path d="M2.6 2 L6 3.4 L4 4.6 L2.8 6.2 Z" fill="#fff"/></svg>
<div class="t" style="left:700.80px;top:54.02px;font-size:8.6px;color:#3e3e3e;">StereoFitter Results</div>
<div style="position:absolute;left:597.00px;top:51.20px;width:36.00px;height:0.90px;background:#8e8e8e;"></div>
<svg style="left:656px;top:50px" width="8" height="4" viewBox="656 50 8 4"><ellipse cx="659.8" cy="51.6" rx="1.8" ry="0.7" fill="#111"/></svg>
<div style="position:absolute;left:477.50px;top:546.20px;width:500.00px;height:0.80px;background:#d4d4d4;"></div>
<div style="position:absolute;left:486.10px;top:80.00px;width:500.00px;height:457.10px;border:1px solid #c9c9c9;border-right:none;box-sizing:border-box;background:#eaeaea;"></div>
<div style="position:absolute;left:719.50px;top:74.30px;width:77.00px;height:13.30px;background:linear-gradient(#f4f4f4,#ececec);border:1px solid #c8c8c8;border-bottom:none;box-sizing:border-box;"></div>
<div style="position:absolute;left:668.00px;top:73.50px;width:51.50px;height:14.20px;background:#fdfdfd;border:1px solid #c8c8c8;border-bottom:none;box-sizing:border-box;"></div>
<div class="t" style="left:677.00px;top:76.35px;font-size:9.75px;color:#000;">Results</div>
<div class="t" style="left:728.00px;top:76.18px;font-size:9.95px;color:#000;">Original Input</div>
<svg style="left:515.8px;top:103.2px" width="10.5" height="11.5" viewBox="0 0 10.5 11.5">
<rect x="1" y="0.5" width="9" height="10.6" rx="1.2" fill="#e6e6e6" stroke="#4f8fe0" stroke-width="1"/>
<rect x="3.4" y="2.2" width="4" height="2.3" fill="none" stroke="#777" stroke-width="0.5"/>
<path d="M3 5.9 H7.9 M3 7.3 H7.9 M3 8.7 H7.9" stroke="#8a8a8a" stroke-width="0.6"/>
<path d="M0.2 3 H1.6 M0.2 5.5 H1.6 M0.2 8 H1.6" stroke="#555" stroke-width="0.6"/>
</svg>
<svg style="left:554.3px;top:103.2px" width="11" height="12" viewBox="0 0 11 12">
<rect x="0.9" y="0.5" width="6.8" height="8.5" rx="1" fill="#dde6f2" stroke="#5a98e2" stroke-width="0.9"/>
<path d="M2 2.5 H5.5 M2 4 H5.5" stroke="#999" stroke-width="0.5"/>
<rect x="3.9" y="3.3" width="6.6" height="8.2" rx="1" fill="#d6d6d6" stroke="#4a8ae0" stroke-width="0.9"/>
<rect x="5.6" y="5" width="3.2" height="4.8" fill="#aaa"/>
<rect x="6.1" y="5.5" width="2.2" height="1.3" fill="#eee"/>
</svg>
<svg style="left:940.5px;top:102.6px" width="14" height="14" viewBox="0 0 14 14">
<rect x="1.3" y="1.2" width="9.2" height="10.8" rx="1.1" fill="#f6f7fa" stroke="#4f8fe0" stroke-width="1"/>
<path d="M0.8 4 H2 M0.8 6 H2 M0.8 8 H2 M0.8 10 H2" stroke="#666" stroke-width="0.5"/>
<path d="M4.6 5.2 L5.6 4.2 L6.4 6 L7.6 5.4 L7.2 3.6 L8.4 4.4 Q9 6.6 7.6 7.4 L11.6 11.4 L10.6 12.2 L6.6 8.4 Q4.8 8.2 4.6 5.2 Z" fill="#a8a8a8"/>
</svg>
<div class="t" style="left:221.30px;width:600px;text-align:center;top:120.65px;font-size:7.85px;color:#0a0a0a;-webkit-text-stroke:0.3px #0a0a0a;">Report</div>
<div class="t" style="left:259.00px;width:600px;text-align:center;top:120.65px;font-size:7.85px;color:#0a0a0a;-webkit-text-stroke:0.3px #0a0a0a;">Copy</div>
<div class="t" style="left:646.50px;width:600px;text-align:center;top:120.65px;font-size:7.85px;color:#0a0a0a;-webkit-text-stroke:0.3px #0a0a0a;">Setup</div>
<div style="position:absolute;left:503.20px;top:136.30px;width:446.20px;height:190.70px;background:#fff;border:1px solid #cfcfcf;box-sizing:border-box;"></div>
<div style="position:absolute;left:503.20px;top:135.80px;width:446.20px;height:13.90px;background:#ececec;border:1px solid #cfcfcf;border-bottom:1px solid #d2d2d2;box-sizing:border-box;"></div>
<div style="position:absolute;left:504.2px;top:149.7px;width:444.2px;height:176.3px;overflow:hidden;">
<div style="position:absolute;left:0.00px;top:12.27px;width:446.20px;height:1.00px;background:#dedede;"></div>
<svg style="left:5.10px;top:4.60px" width="7" height="6" viewBox="0 0 7 6"><path d="M0 0 H6.6 L3.3 5.2 Z" fill="#8b8b8b"/></svg>
<div class="t" style="left:18.80px;top:2.73px;font-size:10px;color:#111;">Solution 1 (2 conformers)</div>
<div class="t" style="left:205.60px;top:2.73px;font-size:10px;color:#111;">119.851</div>
<div class="t" style="left:279.10px;top:2.73px;font-size:10px;color:#111;">121.851</div>
<div class="t" style="left:352.80px;top:2.73px;font-size:10px;color:#111;">1.000</div>
<div style="position:absolute;left:0.00px;top:13.27px;width:446.20px;height:13.27px;background:#cfcfcf;"></div>
<div style="position:absolute;left:0.00px;top:25.54px;width:446.20px;height:1.00px;background:#dedede;"></div>
<div class="t" style="left:33.50px;top:16.00px;font-size:10px;color:#111;">Conformer 7:</div>
<div class="t" style="left:151.80px;top:16.00px;font-size:10px;color:#111;">79.4468%</div>
<div style="position:absolute;left:0.00px;top:38.81px;width:446.20px;height:1.00px;background:#dedede;"></div>
<div class="t" style="left:33.50px;top:29.27px;font-size:10px;color:#111;">Conformer 12:</div>
<div class="t" style="left:151.80px;top:29.27px;font-size:10px;color:#111;">20.5532%</div>
<div style="position:absolute;left:0.00px;top:52.08px;width:446.20px;height:1.00px;background:#dedede;"></div>
<svg style="left:5.10px;top:44.41px" width="7" height="6" viewBox="0 0 7 6"><path d="M0 0 H6.6 L3.3 5.2 Z" fill="#8b8b8b"/></svg>
<div class="t" style="left:18.80px;top:42.55px;font-size:10px;color:#111;">Solution 2 (2 conformers)</div>
<div class="t" style="left:205.60px;top:42.55px;font-size:10px;color:#111;">120.370</div>
<div class="t" style="left:279.10px;top:42.55px;font-size:10px;color:#111;">122.370</div>
<div class="t" style="left:352.80px;top:42.55px;font-size:10px;color:#111;">0.771</div>
<div style="position:absolute;left:0.00px;top:65.35px;width:446.20px;height:1.00px;background:#dedede;"></div>
<div class="t" style="left:33.50px;top:55.81px;font-size:10px;color:#111;">Conformer 7:</div>
<div class="t" style="left:151.80px;top:55.81px;font-size:10px;color:#111;">75.3494%</div>
<div style="position:absolute;left:0.00px;top:78.62px;width:446.20px;height:1.00px;background:#dedede;"></div>
<div class="t" style="left:33.50px;top:69.08px;font-size:10px;color:#111;">Conformer 13:</div>
<div class="t" style="left:151.80px;top:69.08px;font-size:10px;color:#111;">24.6506%</div>
<div style="position:absolute;left:0.00px;top:91.89px;width:446.20px;height:1.00px;background:#dedede;"></div>
<svg style="left:5.10px;top:84.22px" width="7" height="6" viewBox="0 0 7 6"><path d="M0 0 H6.6 L3.3 5.2 Z" fill="#8b8b8b"/></svg>
<div class="t" style="left:18.80px;top:82.36px;font-size:10px;color:#111;">Solution 3 (3 conformers)</div>
<div class="t" style="left:205.60px;top:82.36px;font-size:10px;color:#111;">118.441</div>
<div class="t" style="left:279.10px;top:82.36px;font-size:10px;color:#111;">122.441</div>
<div class="t" style="left:352.80px;top:82.36px;font-size:10px;color:#111;">0.744</div>
<div style="position:absolute;left:0.00px;top:105.16px;width:446.20px;height:1.00px;background:#dedede;"></div>
<div class="t" style="left:33.50px;top:95.62px;font-size:10px;color:#111;">Conformer 5:</div>
<div class="t" style="left:151.80px;top:95.62px;font-size:10px;color:#111;">26.5949%</div>
<div style="position:absolute;left:0.00px;top:118.43px;width:446.20px;height:1.00px;background:#dedede;"></div>
<div class="t" style="left:33.50px;top:108.89px;font-size:10px;color:#111;">Conformer 7:</div>
<div class="t" style="left:151.80px;top:108.89px;font-size:10px;color:#111;">53.7287%</div>
<div style="position:absolute;left:0.00px;top:131.70px;width:446.20px;height:1.00px;background:#dedede;"></div>
<div class="t" style="left:33.50px;top:122.16px;font-size:10px;color:#111;">Conformer 12:</div>
<div class="t" style="left:151.80px;top:122.16px;font-size:10px;color:#111;">19.6764%</div>
<div style="position:absolute;left:0.00px;top:144.97px;width:446.20px;height:1.00px;background:#dedede;"></div>
<svg style="left:5.10px;top:137.30px" width="7" height="6" viewBox="0 0 7 6"><path d="M0 0 H6.6 L3.3 5.2 Z" fill="#8b8b8b"/></svg>
<div class="t" style="left:18.80px;top:135.43px;font-size:10px;color:#111;">Solution 4 (3 conformers)</div>
<div class="t" style="left:205.60px;top:135.43px;font-size:10px;color:#111;">118.681</div>
<div class="t" style="left:279.10px;top:135.43px;font-size:10px;color:#111;">122.681</div>
<div class="t" style="left:352.80px;top:135.43px;font-size:10px;color:#111;">0.660</div>
<div style="position:absolute;left:0.00px;top:158.24px;width:446.20px;height:1.00px;background:#dedede;"></div>
<div class="t" style="left:33.50px;top:148.70px;font-size:10px;color:#111;">Conformer 1:</div>
<div class="t" style="left:92.50px;top:148.70px;font-size:10px;color:#111;">14.0466%</div>
<div style="position:absolute;left:0.00px;top:171.51px;width:446.20px;height:1.00px;background:#dedede;"></div>
<div class="t" style="left:33.50px;top:161.97px;font-size:10px;color:#111;">Conformer 7:</div>
<div class="t" style="left:151.80px;top:161.97px;font-size:10px;color:#111;">67.1827%</div>
<div style="position:absolute;left:0.00px;top:184.78px;width:446.20px;height:1.00px;background:#dedede;"></div>
<div class="t" style="left:33.50px;top:175.24px;font-size:10px;color:#111;">Conformer 12:</div>
<div class="t" style="left:151.80px;top:175.24px;font-size:10px;color:#111;">12.7707%</div>
<div style="position:absolute;left:201.30px;top:0.00px;width:1.00px;height:176.30px;background:#d6d6d6;"></div>
<div style="position:absolute;left:275.40px;top:0.00px;width:1.00px;height:176.30px;background:#d6d6d6;"></div>
<div style="position:absolute;left:348.20px;top:0.00px;width:1.00px;height:176.30px;background:#d6d6d6;"></div>
</div>
<div style="position:absolute;left:705.50px;top:136.30px;width:1.00px;height:12.90px;background:#d0d0d0;"></div>
<div style="position:absolute;left:779.60px;top:136.30px;width:1.00px;height:12.90px;background:#d0d0d0;"></div>
<div style="position:absolute;left:852.40px;top:136.30px;width:1.00px;height:12.90px;background:#d0d0d0;"></div>
<div class="t" style="left:507.50px;top:139.80px;font-size:8.5px;color:#1a1a1a;">Solution</div>
<div class="t" style="left:709.80px;top:139.80px;font-size:8.5px;color:#1a1a1a;">χ²</div>
<div class="t" style="left:783.30px;top:139.80px;font-size:8.5px;color:#1a1a1a;">AIC</div>
<div class="t" style="left:857.00px;top:139.80px;font-size:8.5px;color:#1a1a1a;">Relative Probability</div>
<div style="position:absolute;left:951.20px;top:149.30px;width:12.00px;height:177.70px;background:#f4f4f4;border-left:1px solid #d6d6d6;box-sizing:border-box;"></div>
<div style="position:absolute;left:951.20px;top:149.30px;width:12.00px;height:11.20px;background:#fcfcfc;border:1px solid #d2d2d2;border-bottom:1.5px solid #c4c4c4;box-sizing:border-box;"></div>
<div style="position:absolute;left:951.20px;top:160.50px;width:12.00px;height:101.20px;background:#f7f7f7;border-left:1px solid #d6d6d6;box-sizing:border-box;"></div>
<div style="position:absolute;left:951.20px;top:261.70px;width:12.00px;height:53.10px;background:#c4c4c4;"></div>
<div style="position:absolute;left:951.20px;top:314.80px;width:12.00px;height:11.60px;background:#fcfcfc;border:1px solid #d2d2d2;box-sizing:border-box;"></div>
<svg style="left:954px;top:152.6px" width="7" height="5" viewBox="0 0 7 5"><path d="M0 4.5 H6.6 L3.3 0.3 Z" fill="#666"/></svg>
<svg style="left:954px;top:318.4px" width="7" height="5" viewBox="0 0 7 5"><path d="M0 0.3 H6.6 L3.3 4.5 Z" fill="#666"/></svg>
<div style="position:absolute;left:731.30px;top:327.60px;width:3.40px;height:3.40px;border-radius:50%;background:#c8c8c8;"></div>
<div style="position:absolute;left:503.20px;top:332.00px;width:446.20px;height:188.50px;background:#fff;border:1px solid #cfcfcf;box-sizing:border-box;"></div>
<div style="position:absolute;left:503.20px;top:332.00px;width:446.20px;height:12.40px;background:#ececec;border:1px solid #cfcfcf;border-bottom:1px solid #d2d2d2;box-sizing:border-box;"></div>
<div style="position:absolute;left:504.2px;top:344.4px;width:444.2px;height:175.10000000000002px;overflow:hidden;">
<div style="position:absolute;left:0.00px;top:12.35px;width:446.20px;height:1.00px;background:#dedede;"></div>
<svg style="left:5.10px;top:4.60px" width="7" height="6" viewBox="0 0 7 6"><path d="M0 0 H6.6 L3.3 5.2 Z" fill="#8b8b8b"/></svg>
<div class="t" style="left:18.60px;top:3.04px;font-size:10px;color:#111;">NOE distances (Å)</div>
<div style="position:absolute;left:0.00px;top:25.70px;width:446.20px;height:1.00px;background:#dedede;"></div>
<div class="t" style="left:33.80px;top:16.39px;font-size:10px;color:#111;">25,41</div>
<div class="t" style="left:108.30px;top:16.39px;font-size:10px;color:#111;">2.976</div>
<div class="t" style="left:181.60px;top:16.39px;font-size:10px;color:#111;">5.191</div>
<div style="position:absolute;left:0.00px;top:39.05px;width:446.20px;height:1.00px;background:#dedede;"></div>
<div class="t" style="left:33.80px;top:29.74px;font-size:10px;color:#111;">25,29</div>
<div class="t" style="left:108.30px;top:29.74px;font-size:10px;color:#111;">2.617</div>
<div class="t" style="left:181.60px;top:29.74px;font-size:10px;color:#111;">2.518</div>
<div class="t" style="left:33.80px;top:43.08px;font-size:10px;color:#111;">26,41</div>
<div class="t" style="left:108.30px;top:43.08px;font-size:10px;color:#111;">2.982</div>
<div class="t" style="left:181.60px;top:43.08px;font-size:10px;color:#111;">4.129</div>
<div style="position:absolute;left:0.00px;top:53.40px;width:446.20px;height:13.35px;background:#0a50d8;"></div>
<div style="position:absolute;left:0.00px;top:65.75px;width:446.20px;height:1.00px;background:#dedede;"></div>
<div class="t" style="left:33.80px;top:56.44px;font-size:10px;color:#fff;">26,42</div>
<div class="t" style="left:108.30px;top:56.44px;font-size:10px;color:#fff;">2.648</div>
<div class="t" style="left:181.60px;top:56.44px;font-size:10px;color:#fff;">2.450</div>
<div style="position:absolute;left:0.00px;top:79.10px;width:446.20px;height:1.00px;background:#dedede;"></div>
<div class="t" style="left:33.80px;top:69.78px;font-size:10px;color:#111;">26,36</div>
<div class="t" style="left:108.30px;top:69.78px;font-size:10px;color:#111;">2.823</div>
<div class="t" style="left:181.60px;top:69.78px;font-size:10px;color:#111;">2.533</div>
<div style="position:absolute;left:0.00px;top:92.45px;width:446.20px;height:1.00px;background:#dedede;"></div>
<div class="t" style="left:33.80px;top:83.13px;font-size:10px;color:#111;">26,35</div>
<div class="t" style="left:108.30px;top:83.13px;font-size:10px;color:#111;">1.991</div>
<div class="t" style="left:181.60px;top:83.13px;font-size:10px;color:#111;">4.175</div>
<div style="position:absolute;left:0.00px;top:105.80px;width:446.20px;height:1.00px;background:#dedede;"></div>
<div class="t" style="left:33.80px;top:96.48px;font-size:10px;color:#111;">26,32</div>
<div class="t" style="left:108.30px;top:96.48px;font-size:10px;color:#111;">1.991</div>
<div class="t" style="left:181.60px;top:96.48px;font-size:10px;color:#111;">3.499</div>
<div style="position:absolute;left:0.00px;top:119.15px;width:446.20px;height:1.00px;background:#dedede;"></div>
<div class="t" style="left:33.80px;top:109.83px;font-size:10px;color:#111;">26,30</div>
<div class="t" style="left:108.30px;top:109.83px;font-size:10px;color:#111;">2.682</div>
<div class="t" style="left:181.60px;top:109.83px;font-size:10px;color:#111;">4.667</div>
<div style="position:absolute;left:0.00px;top:132.50px;width:446.20px;height:1.00px;background:#dedede;"></div>
<div class="t" style="left:33.80px;top:123.18px;font-size:10px;color:#111;">26,27</div>
<div class="t" style="left:108.30px;top:123.18px;font-size:10px;color:#111;">2.682</div>
<div class="t" style="left:181.60px;top:123.18px;font-size:10px;color:#111;">2.272</div>
<div style="position:absolute;left:0.00px;top:145.85px;width:446.20px;height:1.00px;background:#dedede;"></div>
<div class="t" style="left:33.80px;top:136.53px;font-size:10px;color:#111;">27,33</div>
<div class="t" style="left:108.30px;top:136.53px;font-size:10px;color:#111;">2.650</div>
<div class="t" style="left:181.60px;top:136.53px;font-size:10px;color:#111;">3.833</div>
<div style="position:absolute;left:0.00px;top:159.20px;width:446.20px;height:1.00px;background:#dedede;"></div>
<div class="t" style="left:33.80px;top:149.88px;font-size:10px;color:#111;">27,29</div>
<div class="t" style="left:108.30px;top:149.88px;font-size:10px;color:#111;">2.686</div>
<div class="t" style="left:181.60px;top:149.88px;font-size:10px;color:#111;">3.873</div>
<div style="position:absolute;left:0.00px;top:160.20px;width:446.20px;height:13.35px;background:#fdd9d9;"></div>
<div style="position:absolute;left:0.00px;top:172.55px;width:446.20px;height:1.00px;background:#f0b8b8;"></div>
<div class="t" style="left:33.80px;top:163.23px;font-size:10px;color:#111;">28,41</div>
<div class="t" style="left:108.30px;top:163.23px;font-size:10px;color:#111;">2.976</div>
<div class="t" style="left:181.60px;top:163.23px;font-size:10px;color:#111;">2.715</div>
<div style="position:absolute;left:0.00px;top:185.90px;width:446.20px;height:1.00px;background:#dedede;"></div>
<div class="t" style="left:33.80px;top:176.58px;font-size:10px;color:#111;">28,45</div>
<div class="t" style="left:108.30px;top:176.58px;font-size:10px;color:#111;">2.976</div>
<div class="t" style="left:181.60px;top:176.58px;font-size:10px;color:#111;">2.715</div>
<div style="position:absolute;left:103.90px;top:0.00px;width:1.00px;height:176.10px;background:#d6d6d6;"></div>
<div style="position:absolute;left:177.30px;top:0.00px;width:1.00px;height:176.10px;background:#d6d6d6;"></div>
</div>
<div style="position:absolute;left:608.10px;top:332.00px;width:1.00px;height:12.40px;background:#d0d0d0;"></div>
<div style="position:absolute;left:681.50px;top:332.00px;width:1.00px;height:12.40px;background:#d0d0d0;"></div>
<div class="t" style="left:507.50px;top:335.00px;font-size:8.5px;color:#1a1a1a;">Atoms</div>
<div class="t" style="left:612.50px;top:335.00px;font-size:8.5px;color:#1a1a1a;">Experimental</div>
<div class="t" style="left:685.80px;top:335.00px;font-size:8.5px;color:#1a1a1a;">Calculated Average</div>
<div style="position:absolute;left:951.20px;top:344.80px;width:12.00px;height:175.20px;background:#f7f7f7;border-left:1px solid #d6d6d6;box-sizing:border-box;"></div>
<div style="position:absolute;left:951.20px;top:344.80px;width:12.00px;height:11.00px;background:#fcfcfc;border:1px solid #d2d2d2;border-bottom:1.5px solid #c4c4c4;box-sizing:border-box;"></div>
<div style="position:absolute;left:951.20px;top:404.80px;width:12.00px;height:104.40px;background:#c4c4c4;"></div>
<div style="position:absolute;left:951.20px;top:509.40px;width:12.00px;height:11.10px;background:#fcfcfc;border:1px solid #d2d2d2;box-sizing:border-box;"></div>
<svg style="left:954px;top:347.8px" width="7" height="5" viewBox="0 0 7 5"><path d="M0 4.5 H6.6 L3.3 0.3 Z" fill="#666"/></svg>
<svg style="left:954px;top:513.6px" width="7" height="5" viewBox="0 0 7 5"><path d="M0 0.3 H6.6 L3.3 4.5 Z" fill="#666"/></svg>
</body></html>
